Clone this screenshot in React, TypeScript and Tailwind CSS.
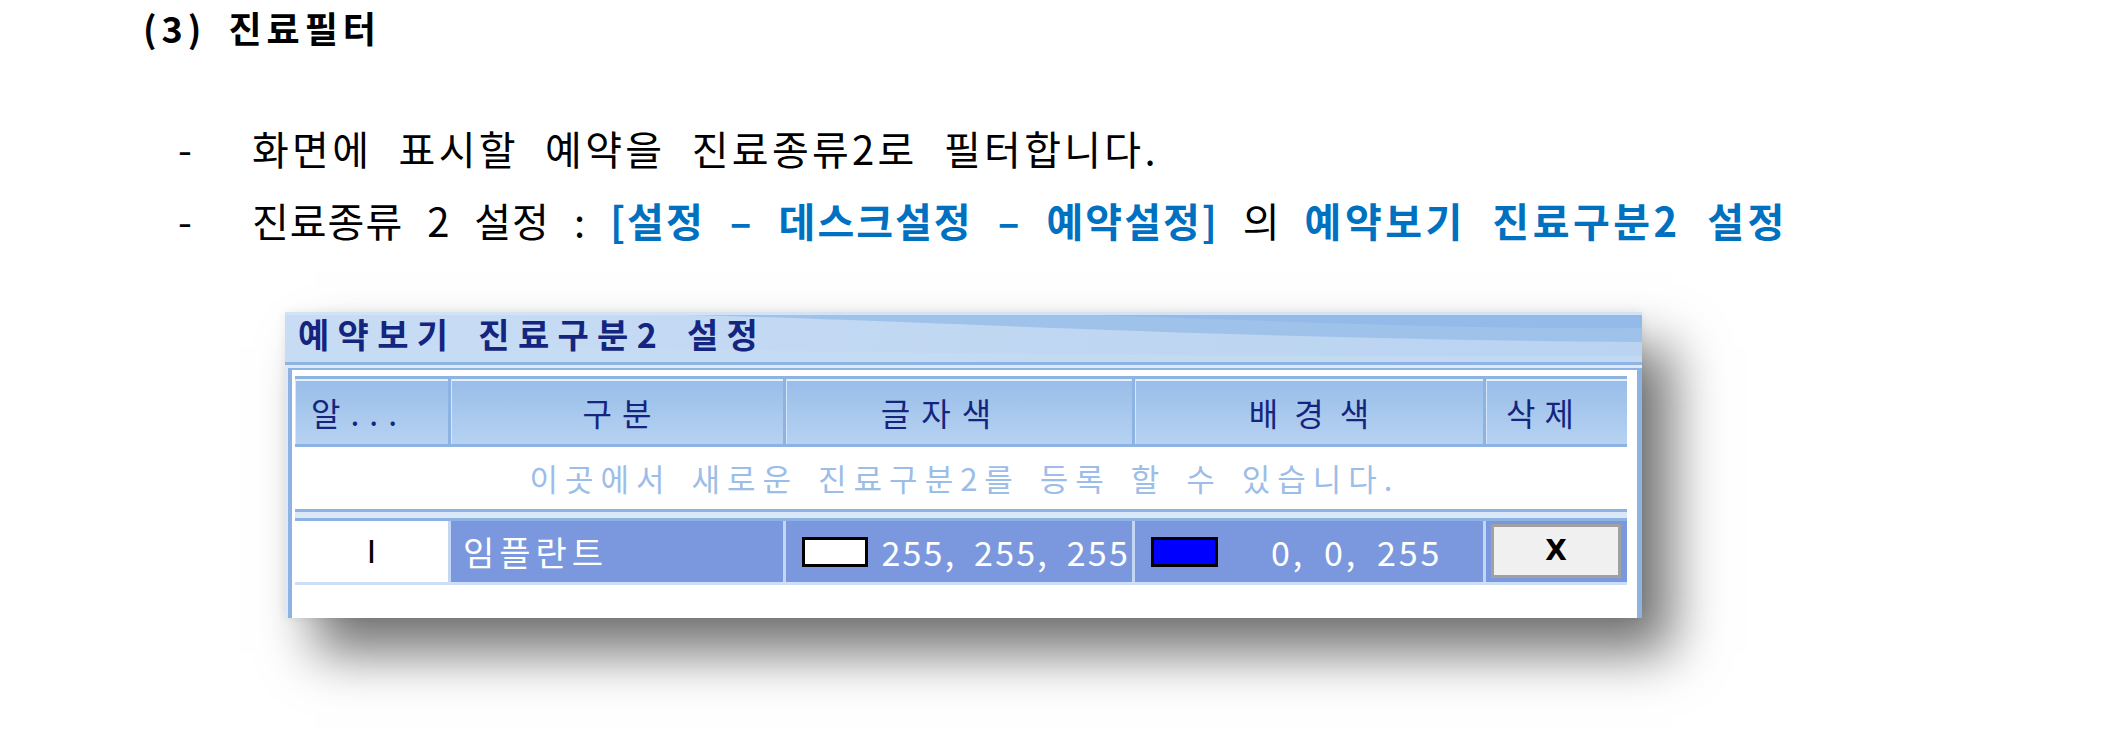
import React from "react";

const KR = "font-['Noto_Sans_CJK_KR','Noto_Sans',sans-serif]";

function TitleBar() {
  return (
    <div className="relative h-[53px] border-b-[3px] border-[#8fb4e3] bg-[#c4daf3]">
      <svg className="absolute inset-0 h-full w-full" viewBox="0 0 1357 50" preserveAspectRatio="none">
        <defs>
          <linearGradient id="tbg" x1="0" y1="0" x2="1" y2="0">
            <stop offset="0" stopColor="#c8dcf4" />
            <stop offset="1" stopColor="#b9d3f1" />
          </linearGradient>
        </defs>
        <rect x="0" y="0" width="1357" height="50" fill="url(#tbg)" />
        <path d="M250,0 C600,4 850,26 1357,30 L1357,0 Z" fill="#9fc2ea" />
        <path d="M700,0 C950,6 1150,18 1357,16 L1357,0 Z" fill="#93bae8" />
        <path d="M0,30 C300,34 700,46 1357,44 L1357,50 L0,50 Z" fill="#c6dbf3" opacity="0.7" />
        <rect x="0" y="0" width="1357" height="3" fill="#d3e3f6" />
      </svg>
      <div className={`relative pl-[13px] text-[34px] leading-[44px] font-bold text-[#142580] tracking-[8.3px] [word-spacing:6px] ${KR}`}>
        예약보기 진료구분2 설정
      </div>
    </div>
  );
}

function HeaderCell({ w, children, align = "center", last = false }: { w: string; children: React.ReactNode; align?: string; last?: boolean }) {
  return (
    <div
      className={`${w} h-full flex items-center ${align === "left" ? "justify-start pl-[16px]" : "justify-center"} ${last ? "" : "border-r-[3px] border-[#8db3e2]"} shadow-[inset_1px_0_0_#d6e5f8]`}
    >
      {children}
    </div>
  );
}

export default function App() {
  return (
    <div className={`w-[2124px] h-[730px] bg-white overflow-hidden ${KR}`}>
      {/* Title */}
      <div className="pl-[143px] pt-[4px] text-[36px] leading-[46px] font-bold text-black flex">
        <span className="tracking-[5px]">(3)</span>
        <span className="ml-[22px] tracking-[5px]">진료필터</span>
      </div>

      {/* Bullets */}
      <div className="mt-[62px] pl-[178px] text-[40px] leading-[72px] text-black">
        <div className="flex">
          <span className="w-[74px]">-</span>
          <span className="tracking-[3.3px] [word-spacing:14px]">화면에 표시할 예약을 진료종류2로 필터합니다.</span>
        </div>
        <div className="flex">
          <span className="w-[74px]">-</span>
          <span className="tracking-[1px] [word-spacing:14px] whitespace-pre">
            진료종류 2 설정 : <span className="font-bold text-[#0070c0] tracking-[2px]">[설정 – 데스크설정 – 예약설정]</span> 의 <span className="font-bold text-[#0070c0] tracking-[3.5px]">예약보기 진료구분2 설정</span>
          </span>
        </div>
      </div>

      {/* Dialog */}
      <div className="mt-[56px] ml-[285px] w-[1357px] h-[306px] flex flex-col bg-white shadow-[30px_35px_50px_rgba(0,0,0,0.55),0_0_10px_rgba(0,0,0,0.08)]">
        <TitleBar />
        <div className="flex-1 flex flex-col bg-[#dde9f8] pt-[3px] pl-[3px]">
          <div className="flex-1 flex flex-col bg-white border-t-[2px] border-l-[4px] border-r-[5px] border-[#8db3e2] pt-[6px] pl-[3px] pr-[10px]">
            {/* Header */}
            <div className="h-[71px] flex border-y-[3px] border-[#8db3e2] bg-gradient-to-b from-[#98bde9] to-[#b6d2f1] shadow-[inset_0_2px_0_#e6effb] text-[32px] text-[#15257d]">
              <HeaderCell w="w-[156px]" align="left">
                <span className="tracking-[10px]">알...</span>
              </HeaderCell>
              <HeaderCell w="w-[335px]">
                <span className="tracking-[10px] pl-[10px]">구분</span>
              </HeaderCell>
              <HeaderCell w="w-[349px]">
                <span className="tracking-[11px] pr-[35px]">글자색</span>
              </HeaderCell>
              <HeaderCell w="w-[351px]">
                <span className="tracking-[16px] pl-[16px]">배경색</span>
              </HeaderCell>
              <HeaderCell w="w-[141px]" last>
                <span className="tracking-[9px] pr-[24px]">삭제</span>
              </HeaderCell>
            </div>

            {/* Info row */}
            <div className="h-[62px] flex items-center justify-center text-[31px] text-[#9cbde8] tracking-[7px] [word-spacing:6px] pl-[7px]">
              이곳에서 새로운 진료구분2를 등록 할 수 있습니다.
            </div>

            {/* Separator */}
            <div className="h-[12px] border-y-[3px] border-[#8db3e2] bg-[#dbe8f8]" />

            {/* Data row */}
            <div className="h-[61px] flex text-white text-[34px]">
              <div className="w-[156px] border-r-[3px] border-[#c4d7f2] bg-white flex items-center justify-center text-black">
                <span className="font-['DejaVu_Sans',sans-serif] font-normal text-[32px]">I</span>
              </div>
              <div className="w-[335px] border-r-[3px] border-[#c4d7f2] bg-[#7b98de] flex items-center pl-[12px] tracking-[5px]">
                임플란트
              </div>
              <div className="w-[349px] border-r-[3px] border-[#c4d7f2] bg-[#7b98de] flex items-center pl-[16px]">
                <div className="w-[66px] h-[30px] border-[3px] border-black bg-white shrink-0" />
                <span className="ml-auto tracking-[2.2px] [word-spacing:8px] mr-[2px]">255, 255, 255</span>
              </div>
              <div className="w-[351px] border-r-[3px] border-[#c4d7f2] bg-[#7b98de] flex items-center pl-[16px]">
                <div className="w-[67px] h-[30px] border-[3px] border-black bg-[#0000ff] shrink-0" />
                <span className="ml-[53px] tracking-[3px] [word-spacing:8px]">0, 0, 255</span>
              </div>
              <div className="w-[141px] bg-[#7b98de] pl-[5px] pr-[6px] pt-[3px] pb-[4px] flex">
                <div className="flex-1 bg-[#f0f0f0] border-[3px] border-[#a0a0a0] flex items-center justify-center text-black font-bold text-[28px] font-['DejaVu_Sans',sans-serif]">
                  X
                </div>
              </div>
            </div>
            <div className="h-[3px] bg-[#cddff6]" />
            <div className="flex-1" />
          </div>
        </div>
      </div>
    </div>
  );
}
